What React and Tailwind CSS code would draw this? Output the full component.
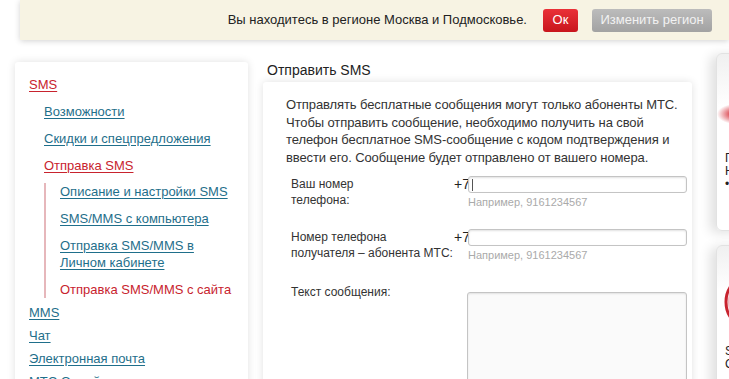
import React from "react";

const font = { fontFamily: '"Liberation Sans", Arial, sans-serif' };

function SideLink({ children, active, current, className = "" }) {
  const color = active || current ? "text-[#c8232e]" : "text-[#1f6f8b]";
  return (
    <li className={`text-[13px] leading-[17px] whitespace-nowrap ${className}`}>
      <span className={`${color} ${current ? "" : "underline underline-offset-2"}`}>{children}</span>
    </li>
  );
}

function PhoneRow({ label, cursor, className = "" }) {
  return (
    <div className={`flex items-start ${className}`}>
      <div className="w-[163px] shrink-0 text-[12px] leading-[16px] text-[#333]">{label}</div>
      <div className="w-[14px] shrink-0 text-[14px] leading-[17px] text-[#222]">+7</div>
      <div className="w-[219px] shrink-0">
        <div className="h-[17px] rounded-[3px] border border-[#c4c4c4] bg-white shadow-[inset_0_1px_2px_rgba(0,0,0,0.12)] flex items-center pl-[3px]">
          {cursor && <span className="block w-px h-[12px] bg-[#555]" />}
        </div>
        <div className="mt-[2px] text-[11px] leading-[14px] text-[#aaa]">Например, 9161234567</div>
      </div>
    </div>
  );
}

export default function App() {
  return (
    <div className="w-[729px] h-[379px] overflow-hidden bg-white" style={font}>
      {/* region banner */}
      <div className="ml-[20px] h-[40px] bg-[#f7f3e3] shadow-[0_1px_6px_rgba(0,0,0,0.18)] flex items-center justify-end pr-[17px]">
        <span className="text-[13px] text-[#222] mr-[16px]">
          Вы находитесь в регионе Москва и Подмосковье.
        </span>
        <button className="h-[23px] w-[35px] rounded-[3px] bg-gradient-to-b from-[#ea3038] to-[#c8141c] text-white text-[13px] mr-[14px]">
          Ок
        </button>
        <button className="h-[23px] w-[120px] rounded-[3px] bg-gradient-to-b from-[#bcbcbc] to-[#a2a2a2] text-[#f2f2f2] text-[13px]">
          Изменить регион
        </button>
      </div>

      <div className="flex items-start pt-[13px] w-[1000px]">
        {/* sidebar */}
        <div className="shrink-0 ml-[15px] mt-[9px] w-[233px] h-[330px] rounded-[3px] bg-white shadow-[0_0_8px_rgba(0,0,0,0.12)] pt-[14px] pl-[14px]">
          <ul>
            <SideLink active>SMS</SideLink>
            <li className="pl-[15px]">
              <ul>
                <SideLink className="mt-[10px]">Возможности</SideLink>
                <SideLink className="mt-[10px]">Скидки и спецпредложения</SideLink>
                <SideLink active className="mt-[10px]">Отправка SMS</SideLink>
                <li className="mt-[9px] border-l-2 border-[#e6b7bb] pl-[14px]">
                  <ul>
                    <SideLink>Описание и настройки SMS</SideLink>
                    <SideLink className="mt-[10px]">SMS/MMS с компьютера</SideLink>
                    <SideLink className="mt-[10px]">
                      Отправка SMS/MMS в<br />Личном кабинете
                    </SideLink>
                    <SideLink current className="mt-[10px]">Отправка SMS/MMS с сайта</SideLink>
                  </ul>
                </li>
              </ul>
            </li>
            <SideLink className="mt-[6px]">MMS</SideLink>
            <SideLink className="mt-[6px]">Чат</SideLink>
            <SideLink className="mt-[6px]">Электронная почта</SideLink>
            <SideLink className="mt-[6px]">МТС Онлайн</SideLink>
          </ul>
        </div>

        {/* main */}
        <div className="shrink-0 ml-[15px] mt-[8px] w-[429px]">
          <h1 className="pl-[4px] text-[14px] leading-[18px] text-[#222]">Отправить SMS</h1>
          <div className="mt-[3px] h-[320px] rounded-[3px] bg-white shadow-[0_0_8px_rgba(0,0,0,0.12)] pt-[14px] pl-[23px]">
            <p className="w-[400px] whitespace-nowrap text-[13px] leading-[17.5px] tracking-[-0.1px] text-[#333]">
              Отправлять бесплатные сообщения могут только абоненты МТС.
              <br />
              Чтобы отправить сообщение, необходимо получить на свой
              <br />
              телефон бесплатное SMS-сообщение с кодом подтверждения и
              <br />
              ввести его. Сообщение будет отправлено от вашего номера.
            </p>
            <div className="pl-[5px]">
              <PhoneRow cursor className="mt-[10px]" label={<>Ваш номер<br />телефона:</>} />
              <PhoneRow className="mt-[20px]" label={<>Номер телефона<br />получателя – абонента МТС:</>} />
              <div className="mt-[22px] flex items-start">
                <div className="w-[176px] shrink-0 text-[12px] leading-[16px] text-[#333]">Текст сообщения:</div>
                <div className="shrink-0 mt-[8px] w-[220px] h-[100px] rounded-[3px] border border-[#c4c4c4] bg-[#fafafa] shadow-[inset_0_1px_2px_rgba(0,0,0,0.1)]" />
              </div>
            </div>
          </div>
        </div>

        {/* right column */}
        <div className="ml-[24px] shrink-0 w-[200px]">
          <div className="h-[178px] rounded-[6px] border border-[#e2e2e2] bg-gradient-to-b from-[#f0f0f0] to-white to-[30%] shadow-[-6px_2px_12px_rgba(0,0,0,0.12)] pl-[8px] pt-[40px]">
            <svg width="40" height="40" viewBox="0 0 40 40" className="-ml-[10px]">
              <defs>
                <radialGradient id="rg" cx="50%" cy="50%" r="50%">
                  <stop offset="0%" stopColor="#d0101c" />
                  <stop offset="100%" stopColor="#d0101c" stopOpacity="0" />
                </radialGradient>
              </defs>
              <ellipse cx="20" cy="20" rx="18" ry="10" fill="url(#rg)" />
            </svg>
            <div className="mt-[18px] text-[12px] leading-[13px] text-[#222]">
              Подключите
              <br />
              Новые
              <br />• услуги
            </div>
          </div>
          <div className="mt-[14px] h-[150px] rounded-[6px] border border-[#e2e2e2] bg-gradient-to-b from-[#f0f0f0] to-white to-[30%] shadow-[-6px_2px_12px_rgba(0,0,0,0.12)] pl-[8px] pt-[33px]">
            <svg width="30" height="46" viewBox="0 0 30 46" className="-ml-[4px]">
              <ellipse cx="18" cy="23" rx="13" ry="20" fill="none" stroke="#c8232e" strokeWidth="3" />
              <ellipse cx="18" cy="23" rx="10" ry="17" fill="none" stroke="#e8b4b8" strokeWidth="2" />
            </svg>
            <div className="mt-[20px] text-[12px] leading-[13px] text-[#222]">
              SMS
              <br />
              Сообщения
            </div>
          </div>
        </div>
      </div>
    </div>
  );
}
